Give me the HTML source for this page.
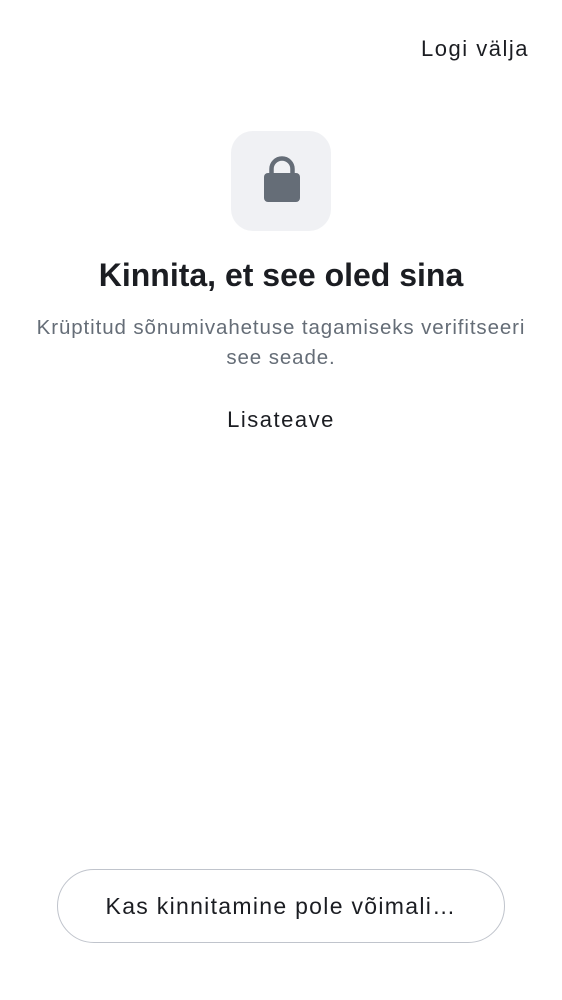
<!DOCTYPE html>
<html><head><meta charset="utf-8"><style>
body{margin:0;width:562px;height:1000px;background:#fff;font-family:"Liberation Sans",sans-serif;color:#1b1d22;position:relative;overflow:hidden}
.a{position:absolute}
</style></head><body>
<div class="a" style="right:33px;top:36px;font-size:22px;letter-spacing:1.5px">Logi välja</div>
<div class="a" style="left:231px;top:131px;width:100px;height:100px;border-radius:22px;background:#f0f1f4"></div>
<svg class="a" style="left:231px;top:131px" width="100" height="100">
<path d="M40.5 44 V38 A10.5 10.5 0 0 1 61.5 38 V44" fill="none" stroke="#656d77" stroke-width="4.5"/>
<rect x="33" y="42" width="36" height="29" rx="4" fill="#656d77"/>
</svg>
<div class="a" style="left:0;width:562px;top:257px;text-align:center;font-size:32px;font-weight:bold;letter-spacing:0">Kinnita, et see oled sina</div>
<div class="a" style="left:20px;width:522px;top:313px;text-align:center;font-size:20.5px;line-height:30px;color:#656d77;letter-spacing:0.9px">Krüptitud sõnumivahetuse tagamiseks verifitseeri see seade.</div>
<div class="a" style="left:0;width:562px;top:407px;text-align:center;font-size:22px;letter-spacing:1.5px">Lisateave</div>
<div class="a" style="left:57px;top:869px;width:446px;height:72px;border:1px solid #c0c4cc;border-radius:37px;text-align:center;line-height:72px;font-size:23px;letter-spacing:1.3px">Kas kinnitamine pole võimali…</div>
</body></html>
